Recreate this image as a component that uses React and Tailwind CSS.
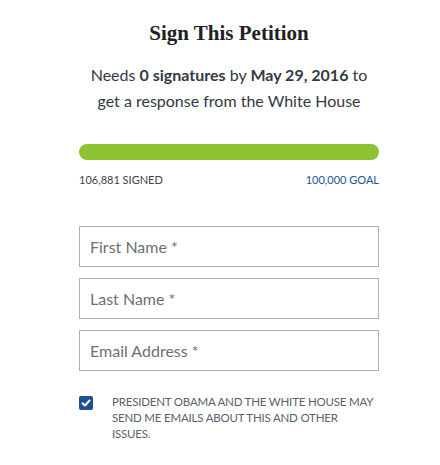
import React from 'react';

export default function App() {
  return (
    <div className="w-[440px] h-[465px] bg-white font-['Lato',sans-serif] text-[#323a45]">
      <div className="w-[300px] ml-[79px] pt-[19px]">
        <h1 className="font-['Liberation_Serif',serif] font-bold text-[21px] leading-[28px] text-center text-[#212121]">
          Sign This Petition
        </h1>

        <p className="mt-[15px] text-[16px] leading-[26px] text-center">
          Needs <b>0 signatures</b> by <b>May 29, 2016</b> to<br />
          get a response from the White House
        </p>

        <div className="mt-[30px] h-[16px] rounded-full bg-[#8dc232]" />
        <div className="mt-[13px] flex justify-between text-[11px] leading-[14px] uppercase">
          <span className="text-[#444]">106,881 Signed</span>
          <span className="text-[#205493]">100,000 Goal</span>
        </div>

        <form className="mt-[39px] flex flex-col gap-[11px]">
          <input
            type="text"
            placeholder="First Name *"
            className="h-[41px] w-full border border-[#aeb0b5] px-[10px] text-[16px] placeholder:text-[#6f6f6f] outline-none"
          />
          <input
            type="text"
            placeholder="Last Name *"
            className="h-[41px] w-full border border-[#aeb0b5] px-[10px] text-[16px] placeholder:text-[#6f6f6f] outline-none"
          />
          <input
            type="email"
            placeholder="Email Address *"
            className="h-[41px] w-full border border-[#aeb0b5] px-[10px] text-[16px] placeholder:text-[#6f6f6f] outline-none"
          />

          <label className="mt-[12px] flex items-start gap-[19px]">
            <span className="mt-[2px] w-[14px] h-[14px] shrink-0 rounded-[2px] bg-[#1f4f8d] flex items-center justify-center">
              <svg width="10" height="10" viewBox="0 0 10 10">
                <path d="M1.5 5.2 L4 7.5 L8.5 2.5" stroke="white" strokeWidth="2" fill="none" strokeLinecap="round" strokeLinejoin="round" />
              </svg>
            </span>
            <span className="text-[11.5px] leading-[16px] tracking-[-0.2px] uppercase text-[#5b616b] whitespace-nowrap">
              President Obama and the White House may<br />
              send me emails about this and other<br />
              issues.
            </span>
          </label>
        </form>
      </div>
    </div>
  );
}
